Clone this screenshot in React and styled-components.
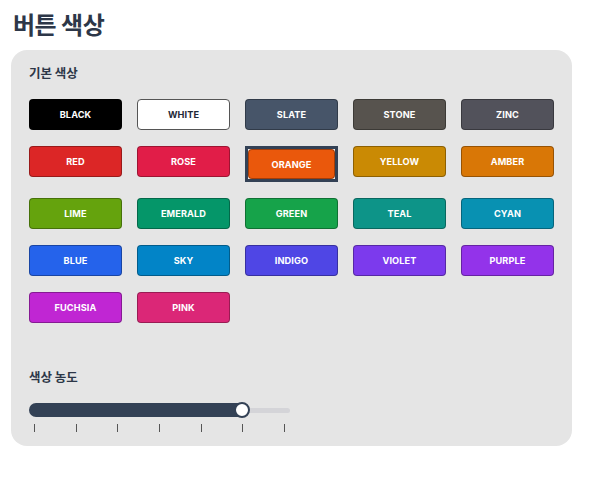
import React from "react";
import styled, { createGlobalStyle } from "styled-components";

const Global = createGlobalStyle`
  html, body { margin: 0; padding: 0; background: #ffffff; }
  body { font-family: "Noto Sans CJK KR", "Noto Sans", sans-serif; color: #2d3748; }
`;

const Page = styled.div`
  width: 561px;
  padding: 0 0 0 11px;
`;

const Title = styled.h1`
  margin: 0;
  padding: 7px 0 0 2px;
  height: 50px;
  box-sizing: border-box;
  font-size: 24px;
  line-height: 34px;
  font-weight: 700;
  letter-spacing: -0.5px;
  color: #2d3748;
`;

const Panel = styled.section`
  background: #e5e5e5;
  border-radius: 16px;
  padding: 14px 18px 14px 18px;
  display: flex;
  flex-direction: column;
`;

const Label = styled.h2`
  margin: 0;
  font-size: 12.5px;
  line-height: 18px;
  font-weight: 700;
  color: #2d3748;
`;

const Grid = styled.div`
  margin-top: 17px;
  display: grid;
  grid-template-columns: repeat(5, 1fr);
  column-gap: 15px;
  row-gap: 16px;
  align-items: start;
`;

const Btn = styled.button`
  box-sizing: border-box;
  width: 100%;
  height: ${(p) => (p.$inner ? "30px" : "31px")};
  border-radius: 4px;
  border: 1px solid ${(p) => (p.$light ? "#555" : "rgba(0,0,0,0.3)")};
  background: ${(p) => p.$bg};
  color: ${(p) => (p.$light ? "#1f2937" : "#ffffff")};
  font-family: Inter, "Liberation Sans", sans-serif;
  font-size: 9.2px;
  font-weight: 700;
  letter-spacing: 0.1px;
  padding: 0;
  display: flex;
  align-items: center;
  justify-content: center;
`;

const Selected = styled.div`
  box-sizing: border-box;
  border: 3px solid #334155;
  background: #f1f1f1;
  height: 36px;
  display: flex;
`;

const SliderLabel = styled(Label)`
  margin-top: 45px;
`;

const Slider = styled.div`
  margin-top: 17px;
  width: 261px;
  display: flex;
  flex-direction: column;
  gap: 7px;
`;

const Track = styled.div`
  position: relative;
  height: 14px;
  display: flex;
  align-items: center;
`;

const Rail = styled.div`
  width: 100%;
  height: 5px;
  border-radius: 3px;
  background: #d4d4d8;
`;

const Fill = styled.div`
  position: absolute;
  left: 0;
  top: 0;
  height: 14px;
  border-radius: 7px 0 0 7px;
  background: #334155;
`;

const Thumb = styled.div`
  position: absolute;
  top: -1px;
  width: 16px;
  height: 16px;
  box-sizing: border-box;
  border-radius: 50%;
  background: #ffffff;
  border: 2px solid #334155;
  transform: translateX(-50%);
`;

const Ticks = styled.div`
  display: flex;
  justify-content: space-between;
  padding: 0 5px;
`;

const Tick = styled.span`
  width: 1px;
  height: 8px;
  background: #555;
`;

const colors = [
  ["BLACK", "#000000"],
  ["WHITE", "#ffffff", true],
  ["SLATE", "#475569"],
  ["STONE", "#57534e"],
  ["ZINC", "#52525b"],
  ["RED", "#dc2626"],
  ["ROSE", "#e11d48"],
  ["ORANGE", "#ea580c", false, true],
  ["YELLOW", "#ca8a04"],
  ["AMBER", "#d97706"],
  ["LIME", "#65a30d"],
  ["EMERALD", "#059669"],
  ["GREEN", "#16a34a"],
  ["TEAL", "#0d9488"],
  ["CYAN", "#0891b2"],
  ["BLUE", "#2563eb"],
  ["SKY", "#0284c7"],
  ["INDIGO", "#4f46e5"],
  ["VIOLET", "#7c3aed"],
  ["PURPLE", "#9333ea"],
  ["FUCHSIA", "#c026d3"],
  ["PINK", "#db2777"],
];

export default function App() {
  const max = 6;
  const pct = (213 / 261) * 100;
  return (
    <Page>
      <Global />
      <Title>버튼 색상</Title>
      <Panel>
        <Label>기본 색상</Label>
        <Grid>
          {colors.map(([name, bg, light, sel]) =>
            sel ? (
              <Selected key={name}>
                <Btn $bg={bg} $inner>{name}</Btn>
              </Selected>
            ) : (
              <Btn key={name} $bg={bg} $light={light}>
                {name}
              </Btn>
            )
          )}
        </Grid>
        <SliderLabel>색상 농도</SliderLabel>
        <Slider>
          <Track>
            <Rail />
            <Fill style={{ width: `${pct}%` }} />
            <Thumb style={{ left: `${pct}%` }} />
          </Track>
          <Ticks>
            {Array.from({ length: max + 1 }).map((_, i) => (
              <Tick key={i} />
            ))}
          </Ticks>
        </Slider>
      </Panel>
    </Page>
  );
}
